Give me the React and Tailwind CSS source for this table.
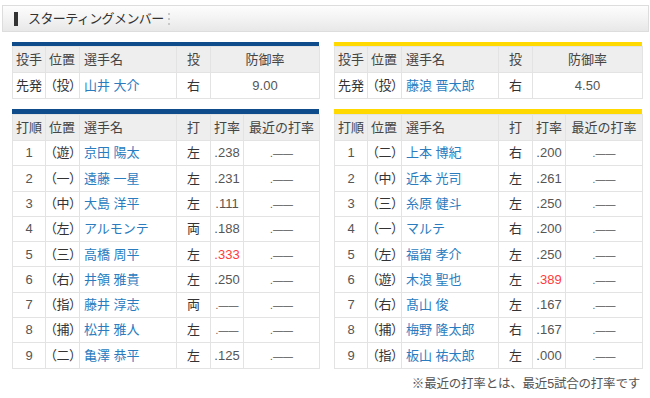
import React from "react";

const pitchers = {
  left: { role: "先発", pos: "（投）", name: "山井 大介", hand: "右", era: "9.00" },
  right: { role: "先発", pos: "（投）", name: "藤浪 晋太郎", hand: "右", era: "4.50" },
};

const lineups = {
  left: [
    ["1", "（遊）", "京田 陽太", "左", ".238"],
    ["2", "（一）", "遠藤 一星", "左", ".231"],
    ["3", "（中）", "大島 洋平", "左", ".111"],
    ["4", "（左）", "アルモンテ", "両", ".188"],
    ["5", "（三）", "高橋 周平", "左", ".333", true],
    ["6", "（右）", "井領 雅貴", "左", ".250"],
    ["7", "（指）", "藤井 淳志", "両", null],
    ["8", "（捕）", "松井 雅人", "左", null],
    ["9", "（二）", "亀澤 恭平", "左", ".125"],
  ],
  right: [
    ["1", "（二）", "上本 博紀", "右", ".200"],
    ["2", "（中）", "近本 光司", "左", ".261"],
    ["3", "（三）", "糸原 健斗", "左", ".250"],
    ["4", "（一）", "マルテ", "右", ".200"],
    ["5", "（左）", "福留 孝介", "左", ".250"],
    ["6", "（遊）", "木浪 聖也", "左", ".389", true],
    ["7", "（右）", "髙山 俊", "左", ".167"],
    ["8", "（捕）", "梅野 隆太郎", "右", ".167"],
    ["9", "（指）", "板山 祐太郎", "左", ".000"],
  ],
};

const th = "h-[26px] border border-[#e3e3e3] bg-[#eeeeee] font-normal text-[#444] text-[13px] px-[3px]";
const td = "border border-[#e3e3e3] bg-white text-[13px] px-[3px]";

const Dash = () => (
  <span className="text-[10px] text-[#555] leading-none">.——</span>
);

const PitcherTable = ({ p, bar, widths }) => (
  <div>
    <div className={`h-[4px] ${bar}`} />
    <table className="w-full table-fixed border-collapse">
      <colgroup>
        {widths.map((w, i) => (
          <col key={i} style={{ width: w }} />
        ))}
      </colgroup>
      <thead>
        <tr>
          <th className={`${th} text-left`}>投手</th>
          <th className={`${th} text-left`}>位置</th>
          <th className={`${th} text-left pl-[4px]`}>選手名</th>
          <th className={`${th} text-center`}>投</th>
          <th className={`${th} text-center`}>防御率</th>
        </tr>
      </thead>
      <tbody>
        <tr>
          <td className={`${td} h-[26px] text-[#333]`}>{p.role}</td>
          <td className={`${td} text-[#333] [font-feature-settings:'palt'] pl-[4px]`}>{p.pos}</td>
          <td className={`${td} text-[#2a7cbf] pl-[4px]`}>{p.name}</td>
          <td className={`${td} text-center text-[#333]`}>{p.hand}</td>
          <td className={`${td} text-center text-[#555] text-[12px]`}>{p.era}</td>
        </tr>
      </tbody>
    </table>
  </div>
);

const LineupTable = ({ rows, bar, widths }) => (
  <div>
    <div className={`h-[5px] ${bar}`} />
    <table className="w-full table-fixed border-collapse">
      <colgroup>
        {widths.map((w, i) => (
          <col key={i} style={{ width: w }} />
        ))}
      </colgroup>
      <thead>
        <tr>
          <th className={`${th} text-center`}>打順</th>
          <th className={`${th} text-left`}>位置</th>
          <th className={`${th} text-left pl-[4px]`}>選手名</th>
          <th className={`${th} text-center`}>打</th>
          <th className={`${th} text-center`}>打率</th>
          <th className={`${th} text-center`}>最近の打率</th>
        </tr>
      </thead>
      <tbody>
        {rows.map(([no, pos, name, hand, avg, hot]) => (
          <tr key={no}>
            <td className={`${td} h-[25.3px] text-center text-[#555] text-[12px]`}>{no}</td>
            <td className={`${td} text-[#333] [font-feature-settings:'palt'] pl-[4px]`}>{pos}</td>
            <td className={`${td} text-[#2a7cbf] pl-[4px]`}>{name}</td>
            <td className={`${td} text-center text-[#333]`}>{hand}</td>
            <td className={`${td} text-center text-[12px] ${hot ? "text-[#ff3b3b]" : "text-[#555]"}`}>
              {avg ? avg : <Dash />}
            </td>
            <td className={`${td} text-center`}>
              <Dash />
            </td>
          </tr>
        ))}
      </tbody>
    </table>
  </div>
);

export default function App() {
  const font = { fontFamily: '"Liberation Sans", "Noto Sans CJK JP", sans-serif' };
  return (
    <div className="w-[650px] h-[398px] bg-white overflow-hidden" style={font}>
      {/* title bar */}
      <div className="mt-[5px] ml-[2px] mr-[1px] h-[27px] border border-[#dddddd] bg-gradient-to-b from-[#fdfdfd] via-[#f3f3f3] to-[#e8e8e8] flex items-center">
        <span className="ml-[11px] w-[4px] h-[14px] bg-[#333]" />
        <span className="ml-[10px] text-[13px] text-[#333] tracking-[-0.6px]">スターティングメンバー</span>
        <span className="ml-[4px] flex flex-col gap-[3px]">
          <span className="w-[2px] h-[2px] bg-[#c8c8c8]" />
          <span className="w-[2px] h-[2px] bg-[#c8c8c8]" />
          <span className="w-[2px] h-[2px] bg-[#c8c8c8]" />
        </span>
      </div>

      <div className="flex pl-[12px] gap-[15px] mt-[10px]">
        <div className="w-[307px] flex flex-col gap-[10px]">
          <PitcherTable p={pitchers.left} bar="bg-[#0f4c8c]" widths={[33, 34, 97, 34, 109]} />
          <LineupTable rows={lineups.left} bar="bg-[#0f4c8c]" widths={[33, 34, 97, 34, 33, 76]} />
        </div>
        <div className="w-[308px] flex flex-col gap-[10px]">
          <PitcherTable p={pitchers.right} bar="bg-[#ffd900]" widths={[33, 34, 97, 34, 110]} />
          <LineupTable rows={lineups.right} bar="bg-[#ffd900]" widths={[33, 34, 97, 34, 33, 77]} />
          <p className="-mt-[4px] pr-[2px] text-right text-[12.5px] text-[#555] tracking-[-0.2px]">
            ※最近の打率とは、最近5試合の打率です
          </p>
        </div>
      </div>
    </div>
  );
}
